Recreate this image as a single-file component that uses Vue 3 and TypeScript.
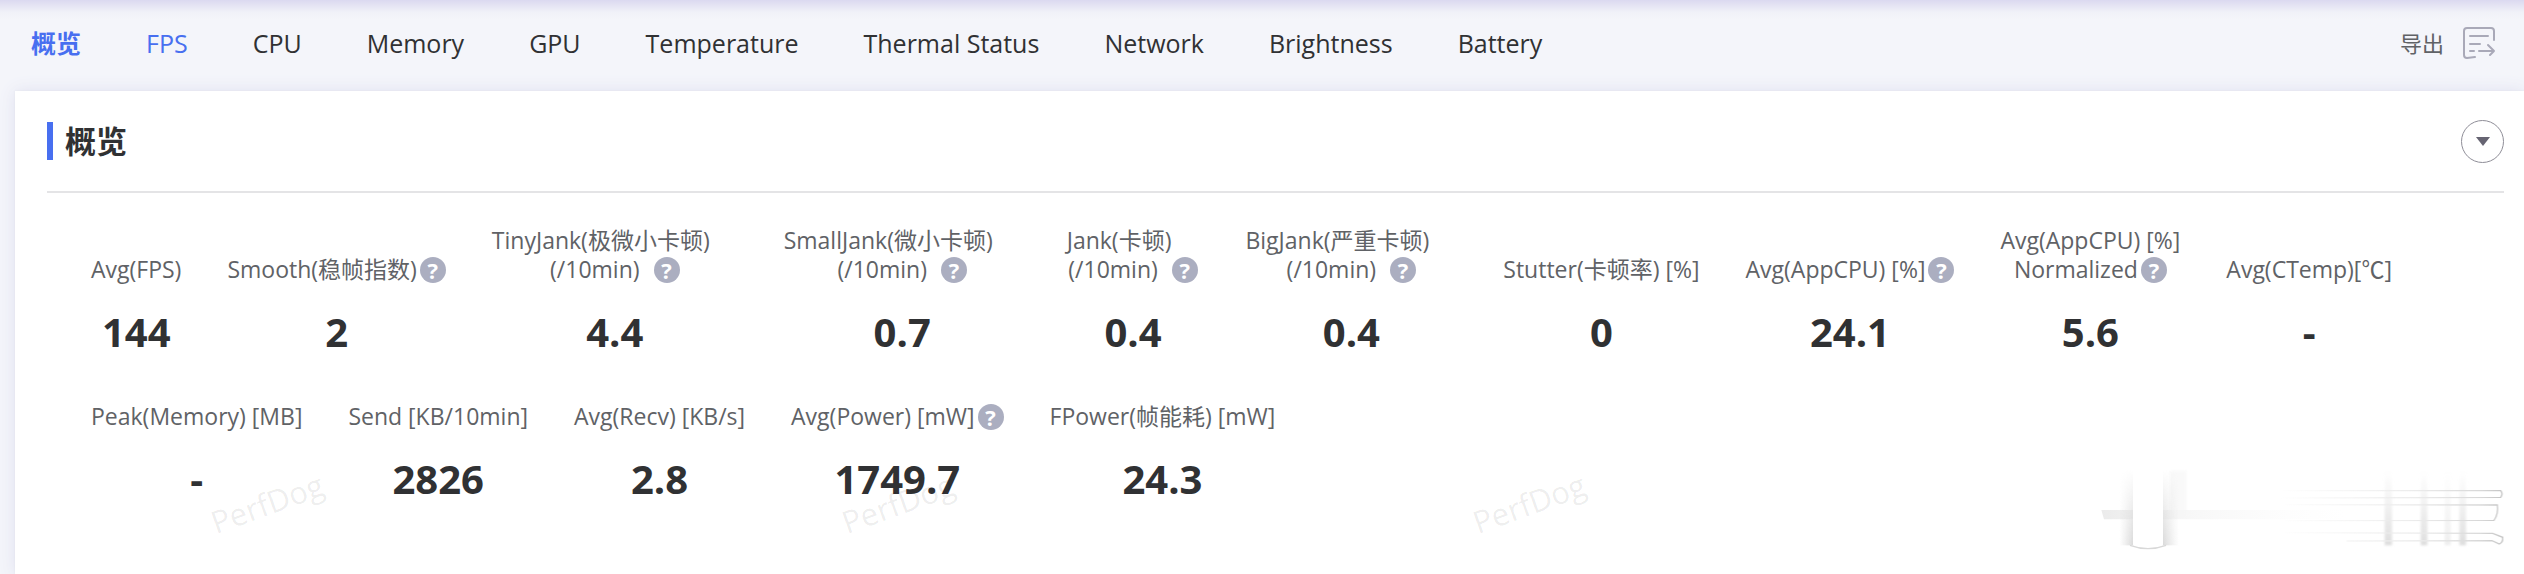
<script setup lang="ts">
import { ref } from 'vue'

interface Tab {
  name: string
  state?: 'current' | 'visited'
}

interface Metric {
  lines: string[]
  value: string
  help?: boolean
  wrapped?: boolean
}

const tabs: Tab[] = [
  { name: '概览', state: 'current' },
  { name: 'FPS', state: 'visited' },
  { name: 'CPU' },
  { name: 'Memory' },
  { name: 'GPU' },
  { name: 'Temperature' },
  { name: 'Thermal Status' },
  { name: 'Network' },
  { name: 'Brightness' },
  { name: 'Battery' },
]

const rows: Metric[][] = [
  [
    { lines: ['Avg(FPS)'], value: '144' },
    { lines: ['Smooth(稳帧指数)'], value: '2', help: true },
    { lines: ['TinyJank(极微小卡顿)', '(/10min)'], value: '4.4', help: true, wrapped: true },
    { lines: ['SmallJank(微小卡顿)', '(/10min)'], value: '0.7', help: true, wrapped: true },
    { lines: ['Jank(卡顿)', '(/10min)'], value: '0.4', help: true, wrapped: true },
    { lines: ['BigJank(严重卡顿)', '(/10min)'], value: '0.4', help: true, wrapped: true },
    { lines: ['Stutter(卡顿率) [%]'], value: '0' },
    { lines: ['Avg(AppCPU) [%]'], value: '24.1', help: true },
    { lines: ['Avg(AppCPU) [%]', 'Normalized'], value: '5.6', help: true },
    { lines: ['Avg(CTemp)[℃]'], value: '-' },
  ],
  [
    { lines: ['Peak(Memory) [MB]'], value: '-' },
    { lines: ['Send [KB/10min]'], value: '2826' },
    { lines: ['Avg(Recv) [KB/s]'], value: '2.8' },
    { lines: ['Avg(Power) [mW]'], value: '1749.7', help: true },
    { lines: ['FPower(帧能耗) [mW]'], value: '24.3' },
  ],
]

const open = ref(true)
</script>

<template>
  <div class="page">
    <header class="topbar">
      <nav class="tabs">
        <a v-for="t in tabs" :key="t.name" href="#" class="tab" :class="t.state">{{ t.name }}</a>
      </nav>
      <button type="button" class="export">
        <span>导出</span>
        <svg width="34" height="34" viewBox="0 0 34 34" fill="none" stroke="#a9a9b8" stroke-width="2" stroke-linecap="round" stroke-linejoin="round">
          <path d="M32 14V5a3 3 0 0 0-3-3H5a3 3 0 0 0-3 3v24a3 3 0 0 0 3 3l8-1" />
          <path d="M8 10h18M8 18h10M8 25h4M17 25h15M26 19l6 6-4 4" />
        </svg>
      </button>
    </header>

    <main class="card">
      <div class="card-head">
        <h1>概览</h1>
        <button type="button" class="toggle" aria-label="展开或收起" :aria-expanded="open" @click="open = !open">
          <svg width="14" height="9" viewBox="0 0 14 9"><path d="M0 0h14L7 9z" fill="#666472" /></svg>
        </button>
      </div>

      <section v-show="open" class="metrics">
        <div v-for="(row, i) in rows" :key="i" class="row">
          <div v-for="m in row" :key="m.lines.join()" class="metric">
            <div v-for="(line, n) in m.lines" :key="n" class="line" :class="{ wrapped: m.wrapped, last: n === m.lines.length - 1 }">
              <span>{{ line }}</span>
              <button v-if="m.help && n === m.lines.length - 1" type="button" class="help" :aria-label="m.lines[0]">?</button>
            </div>
            <strong class="value">{{ m.value }}</strong>
          </div>
        </div>
      </section>

      <div class="watermarks" aria-hidden="true">
        <span v-for="n in 3" :key="n" class="tile"><span class="mark">PerfDog</span></span>
      </div>

      <svg class="smudge" width="444" height="124" viewBox="0 0 1332 372" aria-hidden="true">
        <defs>
          <linearGradient id="edgeL"><stop offset="0" stop-color="#ddd" stop-opacity="0" /><stop offset="1" stop-color="#d8d8d8" /></linearGradient>
          <linearGradient id="edgeR"><stop offset="0" stop-color="#d8d8d8" /><stop offset="1" stop-color="#ddd" stop-opacity="0" /></linearGradient>
          <linearGradient id="band"><stop offset="0" stop-color="#ebebeb" /><stop offset="0.2" stop-color="#f4f4f4" /><stop offset="1" stop-color="#fafafa" stop-opacity="0" /></linearGradient>
          <linearGradient id="thin" gradientUnits="userSpaceOnUse" x1="600" y1="0" x2="1270" y2="0"><stop offset="0" stop-color="#eee" stop-opacity="0" /><stop offset="0.6" stop-color="#ececec" /><stop offset="0.9" stop-color="#d8d8d8" /><stop offset="1" stop-color="#c4c4c4" /></linearGradient>
          <linearGradient id="fade" x1="0" y1="0" x2="0" y2="1"><stop offset="0" stop-color="#000" /><stop offset="1" stop-color="#fff" /></linearGradient>
          <linearGradient id="post" x1="0" y1="0" x2="0" y2="1"><stop offset="0" stop-color="#e4e4e4" stop-opacity="0" /><stop offset="1" stop-color="#dedede" /></linearGradient>
          <mask id="down"><rect x="0" y="60" width="1332" height="230" fill="url(#fade)" /></mask>
          <filter id="soft"><feGaussianBlur stdDeviation="3" /></filter>
        </defs>
        <path d="M64 180H800V208H72z" fill="url(#band)" />
        <rect x="270" y="62" width="50" height="140" fill="#f6f6f6" opacity="0.6" filter="url(#soft)" />
        <g mask="url(#down)">
          <rect x="118" y="60" width="42" height="226" fill="url(#edgeL)" />
          <rect x="248" y="60" width="48" height="226" fill="url(#edgeR)" />
        </g>
        <path d="M159 60h90v224q-45 16-90 0z" fill="#fff" />
        <path d="M150 286Q204 306 258 286" fill="none" stroke="#d8d8d8" stroke-width="4" />
        <g filter="url(#soft)" fill="url(#post)">
          <rect x="914" y="66" width="22" height="220" />
          <rect x="1022" y="66" width="20" height="220" />
          <rect x="1094" y="66" width="18" height="220" opacity="0.5" />
          <rect x="1138" y="66" width="20" height="220" />
        </g>
        <g fill="none" stroke="url(#thin)" stroke-width="4">
          <path d="M600 122H1262q8 10 0 20l-662 2" />
          <path d="M600 164l652 1q4 26-10 46l-642 1" />
          <path d="M600 248l638 2 30 12q2 14-10 20l-22-10-436 1" />
        </g>
      </svg>
    </main>
  </div>
</template>

<style>
body {
  margin: 0;
}
</style>

<style scoped>
.page {
  box-sizing: border-box;
  min-height: 100vh;
  display: flex;
  flex-direction: column;
  overflow: hidden;
  background: #f4f5fa;
  color: #303133;
  font-family: "Open Sans", "Noto Sans CJK SC", sans-serif;
}

button {
  padding: 0;
  border: 0;
  background: none;
  font: inherit;
  color: inherit;
  cursor: pointer;
}

.topbar {
  display: flex;
  align-items: center;
  justify-content: space-between;
  height: 91px;
  box-sizing: border-box;
  padding: 0 28px 5px 31px;
  background: linear-gradient(#dbd9f0, #e4e3f3 5px, #f0f1f8 12px, #f4f5fa 20px);
}

.tabs {
  display: flex;
  gap: 65px;
  font-size: 25px;
  line-height: 36px;
}

.tab {
  color: inherit;
  text-decoration: none;
  white-space: nowrap;
}

.tab.visited,
.tab.current {
  color: #486ff0;
}

.tab.current {
  font-weight: 700;
}

.export {
  display: flex;
  align-items: center;
  gap: 18px;
  font-size: 22px;
  line-height: 32px;
  color: #606266;
}

.card {
  position: relative;
  flex: 1;
  margin-left: 15px;
  padding: 0 20px 0 32px;
  background: #fff;
  box-shadow: 0 0 16px #dfe0f0, 0 0 2px #e6e6ea;
}

.card-head {
  display: flex;
  align-items: center;
  justify-content: space-between;
  height: 100px;
  border-bottom: 2px solid #e4e4e6;
}

h1 {
  margin: 0;
  padding-left: 12px;
  border-left: 6px solid #486ff0;
  font-size: 31px;
  line-height: 38px;
}

.toggle {
  display: flex;
  align-items: center;
  justify-content: center;
  width: 43px;
  height: 43px;
  border: 1px solid #8f8e98;
  border-radius: 50%;
}

.metrics {
  display: flex;
  flex-direction: column;
  gap: 42px;
  padding: 33px 44px;
}

.row {
  display: flex;
  align-items: flex-end;
  gap: 46px;
}

.metric {
  display: flex;
  flex-direction: column;
  align-items: center;
}

.line {
  display: flex;
  align-items: center;
  gap: 3px;
  font-size: 23px;
  line-height: 29px;
  color: #606266;
  white-space: nowrap;
}

.line.wrapped {
  gap: 14px;
  padding-right: 28px;
}

.line.wrapped.last {
  padding-right: 0;
}

.help {
  width: 26px;
  height: 26px;
  border-radius: 50%;
  background: #abaec0;
  color: #fff;
  font-size: 22px;
  font-weight: 700;
  line-height: 26px;
}

.value {
  margin-top: 20px;
  font-size: 40px;
  line-height: 56px;
}

.watermarks {
  position: absolute;
  left: 0;
  bottom: 55px;
  display: flex;
  pointer-events: none;
}

.tile {
  width: 631px;
}

.mark {
  display: block;
  width: 504px;
  text-align: center;
  transform: rotate(-20deg);
  font-size: 31px;
  line-height: 32px;
  color: rgba(0, 0, 0, 0.08);
}

.smudge {
  position: absolute;
  right: 0;
  bottom: 0;
  pointer-events: none;
}
</style>
